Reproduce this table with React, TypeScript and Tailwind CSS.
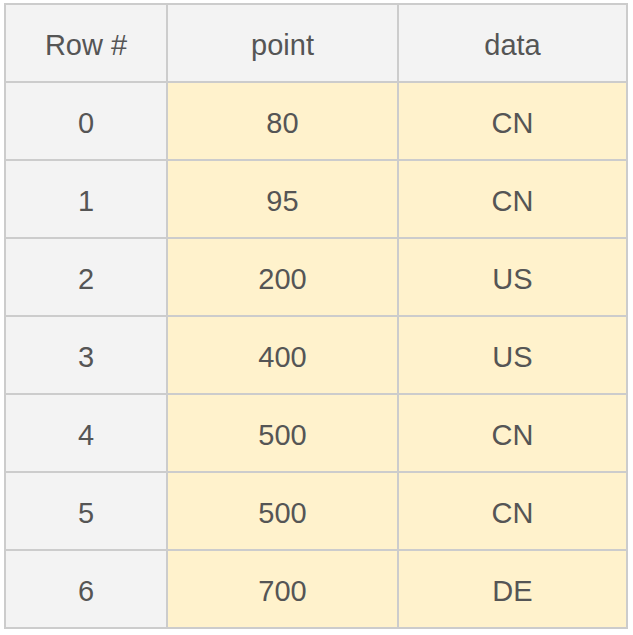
const ROWS: [number, number, string][] = [
  [0, 80, 'CN'],
  [1, 95, 'CN'],
  [2, 200, 'US'],
  [3, 400, 'US'],
  [4, 500, 'CN'],
  [5, 500, 'CN'],
  [6, 700, 'DE'],
];

export default function App() {
  return (
    <div className="min-h-screen bg-white pl-[4px] pt-[3px] font-['Liberation_Sans',Arial,sans-serif] text-[29px] leading-none text-[#555555]">
      <div className="grid w-[624px] grid-cols-[160px_229px_227px] auto-rows-[76px] gap-[2px] border-2 border-[#cccccc] bg-[#cccccc]">
        {/* header */}
        <div className="flex items-center justify-center bg-[#f3f3f3] pt-[5px]">Row #</div>
        <div className="flex items-center justify-center bg-[#f3f3f3] pt-[5px]">point</div>
        <div className="flex items-center justify-center bg-[#f3f3f3] pt-[5px]">data</div>

        {ROWS.map(([i, point, data]) => (
          <div key={i} className="contents">
            <div className="flex items-center justify-center bg-[#f3f3f3] pt-[5px]">{i}</div>
            <div className="flex items-center justify-center bg-[#fff2cc] pt-[5px]">{point}</div>
            <div className="flex items-center justify-center bg-[#fff2cc] pt-[5px]">{data}</div>
          </div>
        ))}
      </div>
    </div>
  );
}
